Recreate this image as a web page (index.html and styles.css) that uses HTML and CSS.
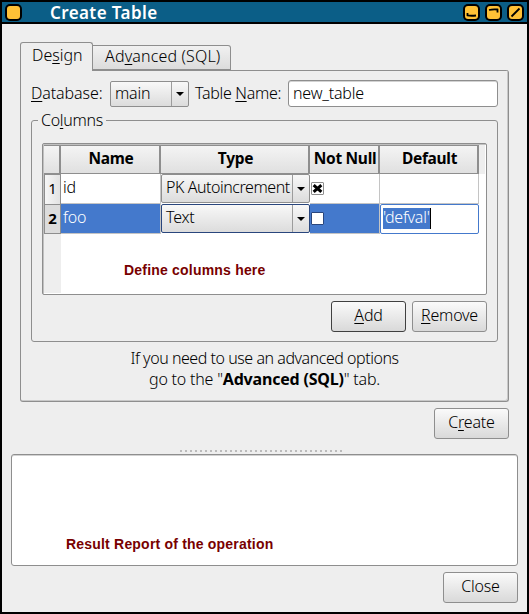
FILE: index.html
```html
<!DOCTYPE html>
<html lang="en">
<head>
<meta charset="utf-8">
<title>Create Table</title>
<link rel="stylesheet" href="styles.css">
</head>
<body>
<div class="window">
  <header class="titlebar">
    <svg class="wbtn" viewBox="0 0 17 17"><rect width="17" height="17" rx="5"/><rect class="face" x="2" y="2" width="13" height="13" rx="3"/></svg>
    <h1>Create Table</h1>
    <svg class="wbtn" viewBox="0 0 17 17"><rect width="17" height="17" rx="5"/><rect class="face" x="2" y="2" width="13" height="13" rx="3"/><path d="M4.500 9v2.300q3 .8 8.500.2"/></svg>
    <svg class="wbtn" viewBox="0 0 17 17"><rect width="17" height="17" rx="5"/><rect class="face" x="2" y="2" width="13" height="13" rx="3"/><path d="M4 6q4-1 8.500-.5v3"/></svg>
    <svg class="wbtn" viewBox="0 0 17 17"><rect width="17" height="17" rx="5"/><rect class="face" x="2" y="2" width="13" height="13" rx="3"/><path d="M4.500 12.500L12.500 4.500"/></svg>
  </header>
  <main class="content">
    <nav class="tabs">
      <div class="tab active">De<u>s</u>ign</div>
      <div class="tab">Ad<u>v</u>anced (SQL)</div>
    </nav>
    <section class="panel">
      <div class="form-row">
        <label class="db"><u>D</u>atabase:</label>
        <div class="combo main"><span>main</span><i class="drop"></i></div>
        <label class="tn">Table <u>N</u>ame:</label>
        <div class="field"><span>new_table</span></div>
      </div>
      <fieldset class="group">
        <legend>Co<u>l</u>umns</legend>
        <div class="table">
          <div class="row head">
            <div></div><div><b>Name</b></div><div><b>Type</b></div><div><b>Not Null</b></div><div><b>Default</b></div>
          </div>
          <div class="row">
            <div class="num">1</div>
            <div class="cell">id</div>
            <div class="combo"><span class="long">PK Autoincrement</span><i class="drop"></i></div>
            <div class="cell"><svg class="check" viewBox="0 0 10 10"><path d="M1.500 2l7 6M8.500 2l-7 6"/></svg></div>
            <div class="cell"></div>
          </div>
          <div class="row selected">
            <div class="num">2</div>
            <div class="cell">foo</div>
            <div class="combo"><span>Text</span><i class="drop"></i></div>
            <div class="cell"><svg class="check" viewBox="0 0 10 10"></svg></div>
            <div class="cell editor"><span>'defval'</span></div>
          </div>
          <div class="empty"><div class="gutter"></div><p class="note columns-note">Define columns here</p></div>
        </div>
        <div class="actions">
          <button class="default"><u>A</u>dd</button>
          <button><u>R</u>emove</button>
        </div>
      </fieldset>
      <p class="hint"><span class="lead">If you need to use an advanced options</span><br>go to the "<b>Advanced (SQL)</b>" tab.</p>
    </section>
    <div class="create"><button>C<u>r</u>eate</button></div>
    <div class="grip"></div>
    <section class="report"><p class="note">Result Report of the operation</p></section>
    <div class="close"><button>Close</button></div>
  </main>
</div>
</body>
</html>
```
FILE: styles.css
```css
* { box-sizing: border-box; }
body {
  margin: 0;
  font: 300 16px/20px "Noto Sans", sans-serif;
  letter-spacing: -0.2px;
  color: #000;
}
.window {
  width: 529px;
  height: 614px;
  border: 2px solid #000;
  background: #eee;
}
u { text-decoration: underline 1px; text-underline-offset: 2px; text-decoration-skip-ink: none; }
b { font-weight: 700; }
.titlebar {
  display: flex;
  align-items: center;
  height: 22px;
  padding: 0 3px;
  gap: 5px;
  background: #0b5e87;
  border-bottom: 2px solid #000;
}
.titlebar h1 {
  flex: 1;
  margin: 2px 0 0 23px;
  color: #fff;
  font-size: 17px;
  font-weight: 600;
  line-height: 20px;
  letter-spacing: 0.4px;
}
.wbtn { width: 17px; height: 17px; margin-top: 1px; flex: none; }
.wbtn .face { fill: #ffc136; }
.wbtn path { fill: none; stroke: #000; stroke-width: 1.8; }
.content { padding: 18px 9px 0; }
.tabs { display: flex; align-items: flex-end; height: 28px; margin: 0 9px; }
.tab {
  width: 138px;
  height: 25px;
  padding: 0 0 0 12px;
  border: 1px solid #8e8e8e;
  border-left: 0;
  border-radius: 0 3px 0 0;
  background: linear-gradient(#f1f1f1, #dcdcdc);
  letter-spacing: 0.15px;
  white-space: nowrap;
}
.tab.active {
  width: 73px;
  height: 28px;
  padding: 2px 0 0 11px;
  border-left: 1px solid #8e8e8e;
  border-bottom: 0;
  border-radius: 3px 3px 0 0;
  background: #eee;
  letter-spacing: 0;
}
.panel {
  width: 489px;
  height: 332px;
  margin: 0 9px;
  padding: 10px 10px 0;
  border: 1px solid #8e8e8e;
  border-top: 0;
  border-radius: 0 3px 3px 3px;
  box-shadow: inset -1px -1px #c8c8c8;
  background: linear-gradient(#8e8e8e, #8e8e8e) right top / 416px 1px no-repeat;
}
.form-row { display: flex; align-items: center; height: 27px; white-space: nowrap; }
.form-row label { padding-bottom: 2px; }
.db { width: 79px; letter-spacing: -0.1px; }
.tn { width: 93px; margin-left: 6px; letter-spacing: -0.3px; }
.combo {
  display: flex;
  height: 26px;
  border: 1px solid #8e8e8e;
  border-radius: 2px;
  background: linear-gradient(#f8f8f8, #dcdcdc);
}
.combo span { flex: 1; min-width: 0; padding-left: 4px; line-height: 23px; white-space: nowrap; }
.combo.main { width: 79px; }
.drop { display: grid; place-items: center; width: 17px; border-left: 1px solid #9c9c9c; }
.drop::after { content: ""; border: 4px solid transparent; border-top-color: #000; border-bottom: 0; }
.field {
  width: 210px;
  height: 27px;
  padding-left: 4px;
  border: 1px solid #8e8e8e;
  border-radius: 3px;
  line-height: 24px;
  background: #fff;
  box-shadow: inset 0 1px #d2d2d2;
}
.group {
  width: 467px;
  height: 232px;
  margin: 3px 0 0;
  padding: 13px 10px 0;
  border: 1px solid #8e8e8e;
  border-radius: 3px;
}
legend { height: 20px; margin-left: -4px; padding: 0 3px; line-height: 20px; letter-spacing: -0.3px; }
.table {
  width: 445px;
  height: 152px;
  border: 1px solid #8e8e8e;
  border-radius: 2px;
  padding: 1px;
  background: #fff;
  box-shadow: inset 1px 1px #c0c0c0;
}
.row { display: grid; grid-template-columns: 17px 100px 149px 70px 99px; height: 30px; }
.row.head { grid-template-columns: 17px 100px 149px 70px 99px 1fr; height: 29px; background: #eee; }
.head div {
  border: solid #8e8e8e;
  border-width: 1px 2px 1px 0;
  background: linear-gradient(#f4f4f4, #e0e0e0);
  text-align: center;
  line-height: 25px;
  white-space: nowrap;
}
.head b { margin-left: 2px; font-size: 15.5px; letter-spacing: -0.3px; }
.num {
  border: solid #8e8e8e;
  border-width: 1px 1px 0 1px;
  background: linear-gradient(90deg, #f6f6f6, #e2e2e2);
  font-size: 15px;
  font-weight: 400;
  line-height: 27px;
  text-align: center;
}
.cell { padding-left: 2px; line-height: 26px; border: solid #c4c4c4; border-width: 0 1px 1px 0; }
.cell:nth-child(4) { display: flex; align-items: center; padding: 0 0 0 1px; }
.row .combo { height: 29px; }
.row .combo span { line-height: 25px; }
.row .combo .long { letter-spacing: -0.45px; }
.check { width: 13px; height: 13px; border: 1px solid #8e8e8e; border-radius: 1px; background: #fff; }
.check path { stroke: #000; stroke-width: 2.8; }
.selected .cell { background: #4479cc; color: #fff; }
.selected .num { background: #dcdcdc; font-weight: 700; border-bottom-width: 1px; }
.selected .combo { border-color: #29467d; }
.selected .check { border-color: #29467d; }
.selected .editor { padding: 3px 2px; border: 1px solid #4479cc; border-radius: 2px; background: #fff; line-height: 20px; }
.editor span { display: block; width: 48px; height: 21px; line-height: 18px; background: #4479cc; border-right: 1px solid #000; letter-spacing: -0.25px; }
.empty { display: flex; height: 59px; }
.gutter { width: 17px; background: #eee; }
.note { margin: 0; font: 700 14px/16px "Liberation Sans", sans-serif; letter-spacing: 0.2px; color: #780000; }
.columns-note { margin: 28px 0 0 63px; }
.actions { display: flex; justify-content: flex-end; gap: 6px; margin-top: 6px; width: 445px; }
button {
  width: 75px;
  height: 31px;
  padding: 0 0 3px;
  border: 1px solid #8e8e8e;
  border-radius: 3px;
  background: linear-gradient(#fafafa, #d9d9d9);
  font: inherit;
  letter-spacing: inherit;
  color: inherit;
}
button.default { border-color: #404040; }
.hint { margin: 6px 0 0; line-height: 21px; text-align: center; white-space: nowrap; }
.lead { letter-spacing: -0.46px; }
.create { margin: 6px 9px 0; text-align: right; height: 31px; }
.grip {
  width: 165px;
  height: 3px;
  margin: 11px auto 0 169px;
  background: repeating-linear-gradient(90deg, #bbb 0 2px, transparent 2px 5px) 0 0 / 100% 2px no-repeat;
}
.report { height: 112px; padding: 81px 0 0 54px; margin-top: 1px; border: 1px solid #8e8e8e; border-radius: 3px; background: #fff; width: 507px; box-shadow: inset 0 1px #d2d2d2; }
.close { width: 507px; margin-top: 6px; text-align: right; }
```
